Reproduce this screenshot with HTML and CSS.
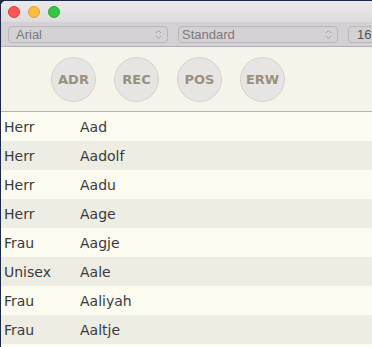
FILE: index.html
```html
<!DOCTYPE html>
<html lang="de">
<head>
    <meta charset="UTF-8">
    <title>Anreden</title>
    <link rel="stylesheet" href="styles.css">
</head>
<body>
    <div class="window">
        <!-- Titelleiste -->
        <div class="titlebar">
            <span class="light red"></span>
            <span class="light yellow"></span>
            <span class="light green"></span>
        </div>

        <!-- Schriftauswahl -->
        <div class="toolbar">
            <div class="popup font">Arial
                <svg class="arrows" width="7" height="11" viewBox="0 0 7 11"><path d="M1 4 L3.5 1.5 L6 4 M1 7 L3.5 9.5 L6 7" fill="none" stroke="#a09fa2" stroke-width="1"/></svg>
            </div>
            <div class="popup style">Standard
                <svg class="arrows" width="7" height="11" viewBox="0 0 7 11"><path d="M1 4 L3.5 1.5 L6 4 M1 7 L3.5 9.5 L6 7" fill="none" stroke="#a09fa2" stroke-width="1"/></svg>
            </div>
            <div class="popup size">16 pt</div>
        </div>

        <div class="buttons">
            <span class="round">ADR</span>
            <span class="round">REC</span>
            <span class="round">POS</span>
            <span class="round">ERW</span>
        </div>

        <table class="liste">
            <tbody>
                <tr><td class="anrede">Herr</td><td>Aad</td></tr>
                <tr><td class="anrede">Herr</td><td>Aadolf</td></tr>
                <tr><td class="anrede">Herr</td><td>Aadu</td></tr>
                <tr><td class="anrede">Herr</td><td>Aage</td></tr>
                <tr><td class="anrede">Frau</td><td>Aagje</td></tr>
                <tr><td class="anrede">Unisex</td><td>Aale</td></tr>
                <tr><td class="anrede">Frau</td><td>Aaliyah</td></tr>
                <tr><td class="anrede">Frau</td><td>Aaltje</td></tr>
            </tbody>
        </table>
    </div>
</body>
</html>
```

FILE: styles.css
```css
body {
    margin: 0;
    background-color: #1d2a45;
    font-family: "DejaVu Sans", Verdana, sans-serif;
    overflow: hidden;
    height: 347px;
}

.window {
    margin: 1px 0 0 1px;
    height: 346px;
    background-color: #fcfbf0;
    border-radius: 5px 0 0 0;
    overflow: hidden;
}

.titlebar {
    height: 21px;
    display: flex;
    align-items: center;
    gap: 8px;
    padding-left: 7px;
    background: linear-gradient(#ebe9eb, #dddbdd);
}

.light {
    width: 12px;
    height: 12px;
    border-radius: 50%;
    box-sizing: border-box;
}

.red { background-color: #fc5753; border: 1px solid #df3e3a; }
.yellow { background-color: #fdbc40; border: 1px solid #de9f2a; }
.green { background-color: #33c748; border: 1px solid #27aa35; }

.toolbar {
    height: 24px;
    display: flex;
    align-items: center;
    gap: 10px;
    padding-left: 7px;
    background-color: #d3d1d3;
    border-bottom: 1px solid #b2b0b2;
    white-space: nowrap;
}

.popup {
    flex: none;
    height: 17px;
    box-sizing: border-box;
    border: 1px solid #b9b7b9;
    border-radius: 4px;
    font-family: "Liberation Sans", Arial, sans-serif;
    font-size: 13px;
    line-height: 15px;
    color: #7b7a7d;
    padding-left: 7px;
    position: relative;
}

.popup.font { width: 160px; }
.popup.style { width: 160px; padding-left: 3px; }
.popup.size { width: 40px; color: #555; padding-left: 8px; }

.arrows {
    position: absolute;
    right: 5px;
    top: 2px;
}

.buttons {
    height: 64px;
    display: flex;
    align-items: center;
    gap: 18px;
    padding-left: 50px;
    background-color: #f5f4ea;
    border-bottom: 1px solid #b5b4ac;
}

.round {
    width: 45px;
    height: 45px;
    box-sizing: border-box;
    border-radius: 50%;
    border: 1px solid #d7d4ca;
    background-color: #e6e5e3;
    color: #9a907e;
    font-weight: bold;
    font-size: 13px;
    display: flex;
    justify-content: center;
    align-items: center;
}

.liste {
    width: 100%;
    border-collapse: collapse;
}

.liste td {
    height: 29px;
    padding: 0 0 0 3px;
    font-size: 14px;
    color: #3a3a3c;
}

.liste td.anrede {
    width: 73px;
}

.liste tr:nth-child(even) {
    background-color: #eeede3;
}
```
